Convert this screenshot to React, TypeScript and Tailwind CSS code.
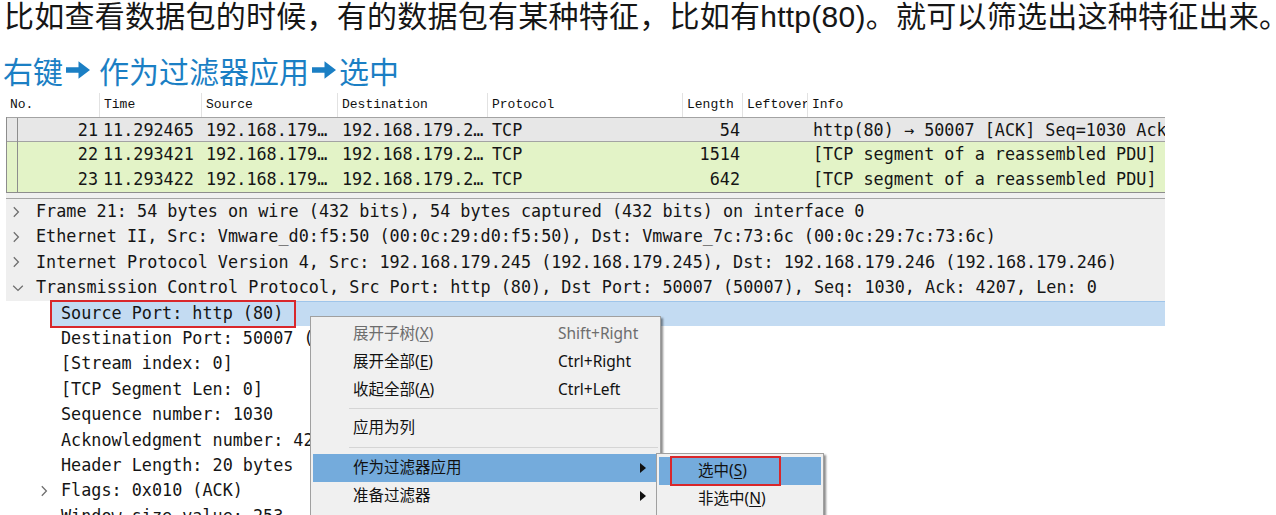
import type { ReactNode } from 'react'

type Packet = {
  no: number
  time: string
  src: string
  dst: string
  proto: string
  len: number
  info: string
  selected?: boolean
}

const packets: Packet[] = [
  { no: 21, time: '11.292465', src: '192.168.179…', dst: '192.168.179.2…', proto: 'TCP', len: 54, info: 'http(80) → 50007 [ACK] Seq=1030 Ack=4207 Win=64128 Len=0', selected: true },
  { no: 22, time: '11.293421', src: '192.168.179…', dst: '192.168.179.2…', proto: 'TCP', len: 1514, info: '[TCP segment of a reassembled PDU]' },
  { no: 23, time: '11.293422', src: '192.168.179…', dst: '192.168.179.2…', proto: 'TCP', len: 642, info: '[TCP segment of a reassembled PDU]' },
]

const headers = ['No.', 'Time', 'Source', 'Destination', 'Protocol', 'Length', 'Leftover Bytes', 'Info']

function BlueArrow() {
  return (
    <svg width="28" height="24" viewBox="0 0 28 24" className="mx-[1px] shrink-0">
      <path d="M2 9.2h12.5V3.2L26 12l-11.5 8.8v-6H2z" fill="currentColor" />
    </svg>
  )
}

function Closed() {
  return (
    <svg width="8" height="12" viewBox="0 0 8 12" className="shrink-0">
      <path d="M1.8 1.2 6.4 6l-4.6 4.8" fill="none" stroke="#6f6f6f" strokeWidth="1.3" />
    </svg>
  )
}

function Open() {
  return (
    <svg width="12" height="8" viewBox="0 0 12 8" className="shrink-0">
      <path d="M1.2 1.8 6 6.4l4.8-4.6" fill="none" stroke="#6f6f6f" strokeWidth="1.3" />
    </svg>
  )
}

function TopLine({ open, children }: { open?: boolean; children: ReactNode }) {
  return (
    <div className="flex h-[25.4px] items-center">
      <div className="flex w-[30px] items-center pl-[6px]">{open ? <Open /> : <Closed />}</div>
      <span>{children}</span>
    </div>
  )
}

function ChildLine({ children }: { children: ReactNode }) {
  return <div className="flex h-[25.4px] items-center pl-[55px]">{children}</div>
}

function Mn({ label, k }: { label: string; k: string }) {
  return (
    <>
      {label}(<span className="underline underline-offset-2">{k}</span>)
    </>
  )
}

function SubArrow() {
  return (
    <svg width="6" height="10" viewBox="0 0 6 10" className="ml-auto mr-[12px] shrink-0">
      <path d="M0 0l6 5-6 5z" fill="#111" />
    </svg>
  )
}

function Sep({ className }: { className: string }) {
  return <div className={`ml-[38px] mr-[2px] h-[2px] border-t border-[#d5d5d5] border-b-white ${className}`} />
}

export default function App() {
  return (
    <div className="relative h-[515px] w-[1276px] overflow-hidden bg-white text-[#111]">
      {/* slide text */}
      <p className="whitespace-nowrap pl-[4px] text-[30px] leading-[34px] tracking-[0.25px] text-[#161616] [font-family:'Liberation_Sans','Noto_Sans_CJK_SC',sans-serif]">
        比如查看数据包的时候，有的数据包有某种特征，比如有http(80)。就可以筛选出这种特征出来。
      </p>
      <p className="mt-[18px] flex h-[36px] items-center whitespace-nowrap pl-[3px] text-[30px] leading-[36px] text-[#1b7fc4] [font-family:'Noto_Sans_CJK_SC',sans-serif]">
        右键
        <BlueArrow />
        <span className="ml-[6px]">作为过滤器应用</span>
        <BlueArrow />
        选中
      </p>

      {/* wireshark */}
      <div className="ml-[6px] mt-[5px] w-[1159px]">
        <div className="grid h-[24px] grid-cols-[94px_102px_136px_150px_195px_60px_65px_357px] text-[13px] text-[#111] [font-family:'Liberation_Mono',monospace]">
          {headers.map((h, i) => (
            <div
              key={h}
              className={`overflow-hidden whitespace-nowrap pl-[4px] leading-[24px] ${i < 7 ? 'border-r border-[#e2e2e2]' : ''}`}
            >
              {h}
            </div>
          ))}
        </div>

        <div className="border-b border-l border-[#8d8d8d] text-[16.8px] text-[#151515] [font-family:'DejaVu_Sans_Mono',monospace]">
          {packets.map((p) => (
            <div
              key={p.no}
              className={`grid h-[25px] grid-cols-[11px_82px_102px_136px_150px_195px_60px_65px_357px] items-center whitespace-nowrap ${
                p.selected ? 'border-y border-[#a3a3a3] bg-[#e7e7e7]' : 'bg-[#e3f3c7]'
              }`}
            >
              <div className="h-full border-r border-[#8d8d8d]" />
              <div className="pr-[2px] text-right">{p.no}</div>
              <div className="pl-[3px]">{p.time}</div>
              <div className="pl-[4px]">{p.src}</div>
              <div className="pl-[4px]">{p.dst}</div>
              <div className="pl-[4px]">{p.proto}</div>
              <div className="pr-[3px] text-right">{p.len}</div>
              <div />
              <div className="overflow-hidden pl-[5px]">{p.info}</div>
            </div>
          ))}
        </div>

        <div className="h-[6px] border-b border-[#a5a5a5] bg-[#f0f0f0]" />

        <div className="whitespace-pre text-[16.8px] text-[#151515] [font-family:'DejaVu_Sans_Mono',monospace]">
          <div className="bg-[#efefef]">
            <TopLine>Frame 21: 54 bytes on wire (432 bits), 54 bytes captured (432 bits) on interface 0</TopLine>
            <TopLine>Ethernet II, Src: Vmware_d0:f5:50 (00:0c:29:d0:f5:50), Dst: Vmware_7c:73:6c (00:0c:29:7c:73:6c)</TopLine>
            <TopLine>Internet Protocol Version 4, Src: 192.168.179.245 (192.168.179.245), Dst: 192.168.179.246 (192.168.179.246)</TopLine>
            <TopLine open>Transmission Control Protocol, Src Port: http (80), Dst Port: 50007 (50007), Seq: 1030, Ack: 4207, Len: 0</TopLine>
          </div>
          <div className="flex h-[25.4px] pl-[46px]">
            <div className="relative flex flex-1 items-center border-t border-[#9fc5ea] bg-[#c3dbf2] pl-[9px]">
              Source Port: http (80)
              <span className="absolute -top-[2px] -left-[2px] h-[28px] w-[246px] border-2 border-[#d9272b]" />
            </div>
          </div>
          <ChildLine>Destination Port: 50007 (50007)</ChildLine>
          <ChildLine>[Stream index: 0]</ChildLine>
          <ChildLine>[TCP Segment Len: 0]</ChildLine>
          <ChildLine>Sequence number: 1030    (relative sequence number)</ChildLine>
          <ChildLine>Acknowledgment number: 4207    (relative ack number)</ChildLine>
          <ChildLine>Header Length: 20 bytes</ChildLine>
          <div className="flex h-[25.4px] items-center pl-[34px]">
            <Closed />
            <span className="ml-[13px]">Flags: 0x010 (ACK)</span>
          </div>
          <ChildLine>Window size value: 253</ChildLine>
        </div>
      </div>

      {/* context menu */}
      <div className="absolute left-[310px] top-[316px] w-[351px] border border-[#a0a0a0] bg-[#f0f0f0] pb-[20px] pt-[3px] text-[15.5px] text-[#111] shadow-[2px_2px_2px_rgba(0,0,0,0.45)] [font-family:'Noto_Sans','Noto_Sans_CJK_SC',sans-serif]">
        <div className="mx-[2px] flex h-[28px] items-center pl-[40px] text-[#6d6d6d]">
          <span className="w-[205px]"><Mn label="展开子树" k="X" /></span>
          <span>Shift+Right</span>
        </div>
        <div className="mx-[2px] flex h-[28px] items-center pl-[40px]">
          <span className="w-[205px]"><Mn label="展开全部" k="E" /></span>
          <span>Ctrl+Right</span>
        </div>
        <div className="mx-[2px] flex h-[28px] items-center pl-[40px]">
          <span className="w-[205px]"><Mn label="收起全部" k="A" /></span>
          <span>Ctrl+Left</span>
        </div>
        <Sep className="mb-[4px] mt-[4px]" />
        <div className="mx-[2px] flex h-[28px] items-center pl-[40px]">应用为列</div>
        <Sep className="mb-[5px] mt-[5px]" />
        <div className="mx-[2px] flex h-[28px] items-center bg-[#74abdc] pl-[40px]">
          作为过滤器应用
          <SubArrow />
        </div>
        <div className="mx-[2px] flex h-[28px] items-center pl-[40px]">
          准备过滤器
          <SubArrow />
        </div>
      </div>

      {/* submenu */}
      <div className="absolute left-[656px] top-[453px] w-[168px] border border-[#a0a0a0] bg-[#f0f0f0] pb-[10px] pt-[3px] text-[15.5px] text-[#111] shadow-[2px_2px_2px_rgba(0,0,0,0.45)] [font-family:'Noto_Sans','Noto_Sans_CJK_SC',sans-serif]">
        <div className="relative mx-[2px] flex h-[28px] items-center bg-[#74abdc] pl-[39px]">
          <Mn label="选中" k="S" />
          <span className="absolute -top-[1px] left-[11px] h-[30px] w-[111px] border-2 border-[#d9272b]" />
        </div>
        <div className="mx-[2px] flex h-[28px] items-center pl-[39px]">
          <Mn label="非选中" k="N" />
        </div>
      </div>
    </div>
  )
}
